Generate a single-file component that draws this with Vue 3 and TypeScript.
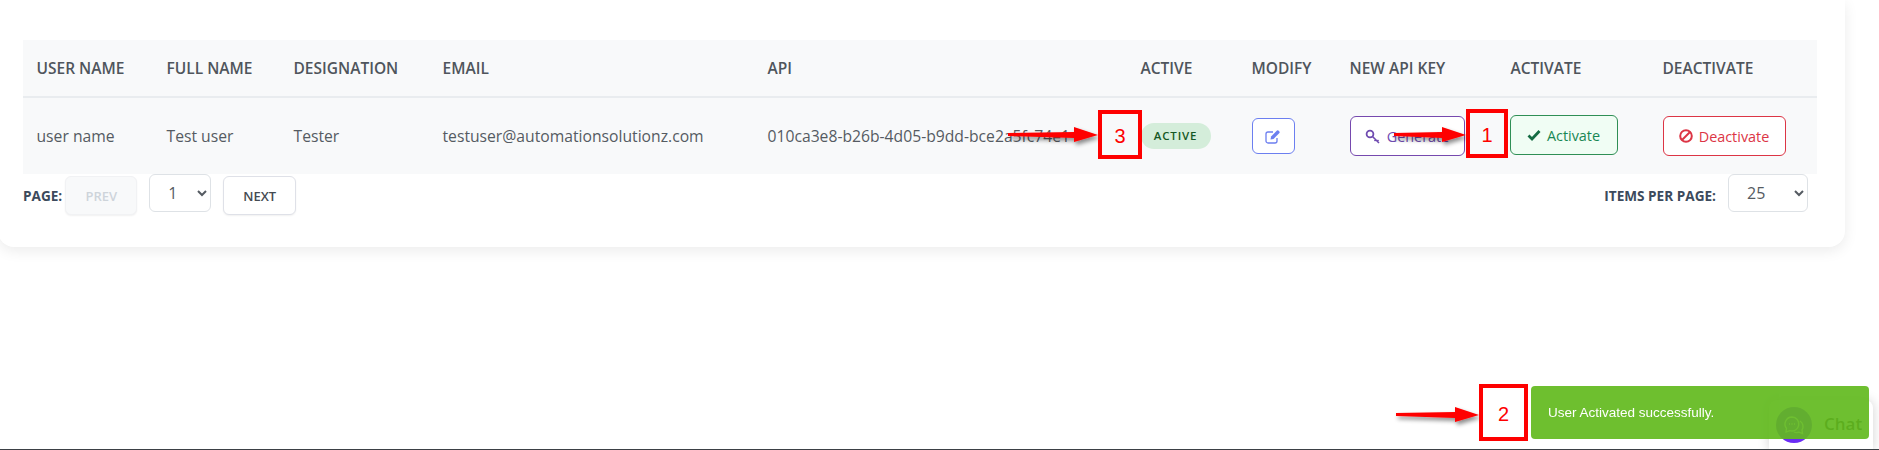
<script setup lang="ts">
interface Note {
  label: string
  box: [number, number, number, number]
  tipX: number
  tailX: number
  y: number
}

const columns = ['User Name', 'Full Name', 'Designation', 'Email', 'API', 'Active', 'Modify', 'New API Key', 'Activate', 'Deactivate']

const notes: Note[] = [
  { label: '1', box: [1468, 111, 38, 45], tipX: 1466, tailX: 1394, y: 135 },
  { label: '2', box: [1481, 386, 45, 53], tipX: 1479, tailX: 1396, y: 415 },
  { label: '3', box: [1100, 112, 40, 45], tipX: 1098, tailX: 1008, y: 135 },
]

function arrow(n: Note): string {
  const neck = n.tipX - 24
  return `${n.tailX},${n.y - 2} ${neck},${n.y - 3} ${neck},${n.y - 8} ${n.tipX},${n.y} ${neck},${n.y + 7} ${neck},${n.y + 3} ${n.tailX},${n.y + 1}`
}
</script>

<template>
  <div class="page">
    <section class="card">
      <table class="users">
        <colgroup>
          <col style="width: 130px" />
          <col style="width: 127px" />
          <col style="width: 149px" />
          <col style="width: 325px" />
          <col style="width: 373px" />
          <col style="width: 111px" />
          <col style="width: 98px" />
          <col style="width: 161px" />
          <col style="width: 152px" />
          <col style="width: 168px" />
        </colgroup>
        <thead>
          <tr>
            <th v-for="c in columns" :key="c">{{ c }}</th>
          </tr>
        </thead>
        <tbody>
          <tr>
            <td>user name</td>
            <td>Test user</td>
            <td>Tester</td>
            <td>testuser@automationsolutionz.com</td>
            <td>010ca3e8-b26b-4d05-b9dd-bce2a5fc74e1</td>
            <td><span class="badge">Active</span></td>
            <td>
              <button class="btn btn-modify" aria-label="Modify">
                <svg width="16" height="15" viewBox="0 0 16 15" fill="none">
                  <path d="M12 9v3a2 2 0 0 1-2 2H3a2 2 0 0 1-2-2V5a2 2 0 0 1 2-2h5" stroke="currentColor" stroke-width="1.3" />
                  <path d="M5.5 10.5l.6-3L12 1.6a1 1 0 0 1 1.4 0l1 1a1 1 0 0 1 0 1.4L8.500 9.900z" fill="currentColor" />
                </svg>
              </button>
            </td>
            <td>
              <button class="btn btn-generate">
                <svg width="16" height="15" viewBox="0 0 16 15" fill="none" stroke="currentColor">
                  <circle cx="5" cy="5" r="3.4" stroke-width="1.800" />
                  <path d="M7.500 7.500L14 14M11 10.500l-1.500 1.500M13.500 11l-1.500 1.500" stroke-width="1.600" />
                </svg>
                Generate
              </button>
            </td>
            <td>
              <button class="btn btn-activate">
                <svg width="14" height="12" viewBox="0 0 14 12" fill="none">
                  <path d="M1.500 6.500L5 10 12.500 2" stroke="#146c43" stroke-width="2.800" />
                </svg>
                Activate
              </button>
            </td>
            <td>
              <button class="btn btn-deactivate">
                <svg width="14" height="14" viewBox="0 0 14 14" fill="none" stroke="currentColor" stroke-width="2">
                  <circle cx="7" cy="7" r="5.800" />
                  <path d="M3 11L11 3" />
                </svg>
                Deactivate
              </button>
            </td>
          </tr>
        </tbody>
      </table>

      <div class="pager">
        <div class="pager-side">
          <span class="pager-label">Page:</span>
          <button class="pager-btn" disabled>Prev</button>
          <select class="pager-select page-select">
            <option>1</option>
          </select>
          <button class="pager-btn">Next</button>
        </div>
        <div class="pager-side">
          <span class="pager-label">Items per page:</span>
          <select class="pager-select size-select">
            <option>25</option>
          </select>
        </div>
      </div>
    </section>

    <div class="chat">
      <span class="chat-icon">
        <svg width="22" height="20" viewBox="0 0 22 20" fill="none" stroke="#fff" stroke-width="1.300">
          <path d="M9 2a7 7 0 0 0-5.500 11.300L3 17l3.800-1.300A7 7 0 1 0 9 2z" />
          <path d="M17 6a6.500 6.500 0 0 1 2 9l.5 3.500-3.500-1.300a6.500 6.500 0 0 1-5-.2" />
          <path d="M6 9h1M8.500 9h1M11 9h1" />
        </svg>
      </span>
      <span class="chat-text">Chat</span>
    </div>
    <div class="toast">User Activated successfully.</div>

    <svg class="notes" width="1879" height="450" viewBox="0 0 1879 450">
      <defs>
        <filter id="arrow-shadow" x="-10%" y="-100%" width="120%" height="300%">
          <feDropShadow dx="2" dy="3" stdDeviation="2" flood-color="#000" flood-opacity="0.45" />
        </filter>
      </defs>
      <g v-for="n in notes" :key="n.label">
        <polygon :points="arrow(n)" fill="#fe0000" filter="url(#arrow-shadow)" />
        <rect :x="n.box[0]" :y="n.box[1]" :width="n.box[2]" :height="n.box[3]" fill="none" stroke="#fe0000" stroke-width="4" />
        <text class="note-label" :x="n.box[0] + n.box[2] / 2" :y="n.box[1] + n.box[3] / 2 + 8" text-anchor="middle">{{ n.label }}</text>
      </g>
    </svg>
  </div>
</template>

<style>
html,
body {
  margin: 0;
  background: #fff;
  overflow: hidden;
}
</style>

<style scoped>
.page {
  position: relative;
  height: 449px;
  width: 1879px;
  overflow: hidden;
  border-bottom: 1px solid #3b4045;
  font-family: "Open Sans", "Noto Sans", sans-serif;
  color: #555b62;
}

.card {
  width: 1847px;
  height: 247px;
  margin-left: -2px;
  padding: 40px 28px 0 25px;
  box-sizing: border-box;
  background: #fff;
  border-radius: 0 0 16px 16px;
  box-shadow: 0 4px 14px rgba(0, 0, 0, 0.08);
}

.users {
  width: 1794px;
  table-layout: fixed;
  border-collapse: collapse;
  background: #f8f9fa;
}

.users th {
  height: 56px;
  padding: 0 0 0 13.5px;
  text-align: left;
  font-size: 15.5px;
  font-weight: 600;
  text-transform: uppercase;
  color: #4f555c;
  border-bottom: 2px solid #e9ecef;
}

.users td {
  height: 76px;
  padding: 0 0 0 13.5px;
  font-size: 15.7px;
  white-space: nowrap;
}

.badge {
  display: inline-block;
  width: 70px;
  height: 26px;
  line-height: 26px;
  text-align: center;
  border-radius: 13px;
  background: #d4edda;
  color: #155724;
  font-size: 11.5px;
  font-weight: 600;
  letter-spacing: 0.8px;
  text-transform: uppercase;
}

.btn {
  display: inline-flex;
  align-items: center;
  justify-content: center;
  gap: 6px;
  height: 40px;
  padding: 0;
  box-sizing: border-box;
  border: 1px solid;
  border-radius: 6px;
  background: #fff;
  font-family: inherit;
  font-size: 14.4px;
  vertical-align: middle;
}

.btn-modify {
  width: 43px;
  height: 36px;
  color: #6c7ff0;
  border-color: #6c7ff0;
}

.btn-generate {
  width: 115px;
  color: #6f4bb0;
  border-color: #7649ae;
}

.btn-activate {
  width: 108px;
  margin-left: -1px;
  color: #198754;
  border-color: #2f8f55;
  background: #f0fdf4;
  position: relative;
  top: -1px;
}

.btn-deactivate {
  width: 123px;
  color: #dc3545;
  border-color: #dc3545;
}

.pager {
  display: flex;
  justify-content: space-between;
  width: 1785px;
}

.pager-side {
  display: flex;
  align-items: flex-start;
}

.pager-label {
  margin-top: 12px;
  font-size: 13.6px;
  font-weight: 700;
  text-transform: uppercase;
  color: #3c4a5c;
}

.pager-btn {
  width: 73px;
  height: 39px;
  margin: 2px 0 0 12px;
  box-sizing: border-box;
  border: 1px solid #dfe1e8;
  border-radius: 6px;
  background: #fff;
  box-shadow: 0 1px 2px rgba(0, 0, 0, 0.06);
  font-family: inherit;
  font-size: 13px;
  font-weight: 600;
  text-transform: uppercase;
  color: #454b52;
}

.pager-btn:disabled {
  margin-left: 3px;
  width: 72px;
  background: #f8f9fa;
  border-color: #f1f2f4;
  color: #ced4da;
}

.pager-select {
  height: 38px;
  box-sizing: border-box;
  border: 1px solid #dee2e6;
  border-radius: 6px;
  background: #fff;
  font-family: inherit;
  font-size: 16px;
  color: #555b62;
}

.page-select {
  width: 62px;
  margin-left: 12px;
  padding-left: 14px;
}

.size-select {
  width: 80px;
  margin-left: 12px;
  padding-left: 14px;
}

.chat {
  position: absolute;
  left: 1769px;
  top: 400px;
  width: 104px;
  height: 50px;
  display: flex;
  align-items: flex-start;
  gap: 12px;
  padding: 7px 0 0 7px;
  box-sizing: border-box;
  background: #fff;
  border-radius: 8px 8px 0 0;
  box-shadow: 0 0 12px rgba(0, 0, 0, 0.18);
}

.chat-icon {
  width: 36px;
  height: 36px;
  display: flex;
  align-items: center;
  justify-content: center;
  border-radius: 50%;
  background: #6a2cf5;
}

.chat-text {
  margin-top: 5px;
  font-size: 17px;
  font-weight: 600;
  color: #222;
}

.toast {
  position: absolute;
  left: 1531px;
  top: 386px;
  width: 338px;
  height: 53px;
  display: flex;
  align-items: center;
  padding: 0 0 0 17px;
  box-sizing: border-box;
  border-radius: 4px;
  background: #62ba1e;
  opacity: 0.92;
  color: #fff;
  font-family: "Liberation Sans", Arial, sans-serif;
  font-size: 13.5px;
}

.notes {
  position: absolute;
  left: 0;
  top: 0;
  pointer-events: none;
}

.note-label {
  font-family: "Liberation Sans", Arial, sans-serif;
  font-size: 20px;
  fill: #fe0000;
}
</style>
